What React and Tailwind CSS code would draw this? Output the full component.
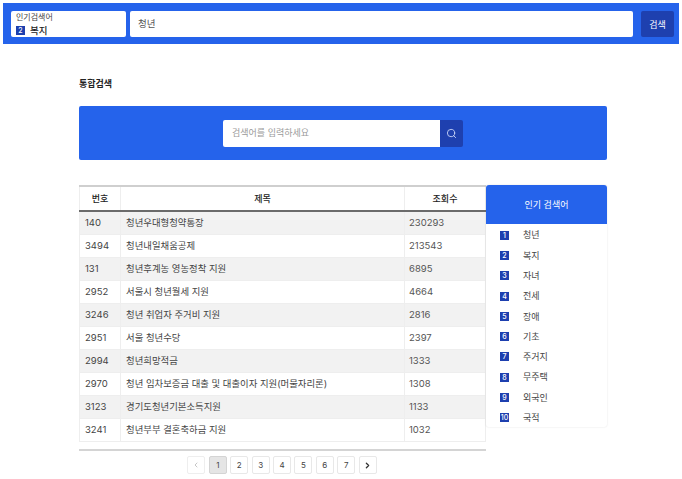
import React from "react";
import { Search, ChevronLeft, ChevronRight } from "lucide-react";

const rows = [
  ["140", "청년우대형청약통장", "230293"],
  ["3494", "청년내일채움공제", "213543"],
  ["131", "청년후계농 영농정착 지원", "6895"],
  ["2952", "서울시 청년월세 지원", "4664"],
  ["3246", "청년 취업자 주거비 지원", "2816"],
  ["2951", "서울 청년수당", "2397"],
  ["2994", "청년희망적금", "1333"],
  ["2970", "청년 임차보증금 대출 및 대출이자 지원(머물자리론)", "1308"],
  ["3123", "경기도청년기본소득지원", "1133"],
  ["3241", "청년부부 결혼축하금 지원", "1032"],
];
const popular = ["청년", "복지", "자녀", "전세", "장애", "기초", "주거지", "무주택", "외국인", "국적"];

function Badge({ n }) {
  return (
    <span className="flex h-[9px] w-[9px] shrink-0 items-center justify-center overflow-hidden bg-[#1e40af] text-[7px] leading-none font-medium text-white">
      {n}
    </span>
  );
}

export default function App() {
  return (
    <div className="h-[479px] w-[682px] overflow-hidden bg-white pt-[3px] font-['Inter','Noto_Sans_CJK_KR',sans-serif] text-[#333]">
      <header className="mx-[3px] flex h-[41px] w-[676px] items-center bg-[#2563eb] pr-[5px] pl-[8px]">
        <div className="flex h-[26px] w-[115px] flex-col justify-end rounded-[2px] bg-white pl-[5px]">
          <span className="mb-[1px] text-[8px] leading-[11px] text-[#444]">인기검색어</span>
          <span className="flex items-center gap-[5px] text-[9.5px] leading-[13px] font-medium text-[#222]">
            <Badge n="2" />
            복지
          </span>
        </div>
        <div className="ml-[4px] flex h-[26px] w-[503px] items-center rounded-[2px] bg-white pt-[2px] pl-[8px] text-[9.5px] text-[#555]">
          청년
        </div>
        <button className="ml-[8px] flex h-[26px] w-[33px] items-center justify-center rounded-[2px] bg-[#1e40af] pt-[2px] text-[9px] text-white">
          검색
        </button>
      </header>

      <main className="mx-[79px] w-[528px]">
        <h1 className="mt-[33px] h-[14px] text-[9px] leading-[14px] font-bold text-[#222]">통합검색</h1>
        <section className="mt-[15px] flex h-[54px] items-center justify-start rounded-[2px] bg-[#2563eb] pl-[144px]">
          <div className="flex h-[27px] w-[217px] items-center rounded-l-[2px] bg-white pl-[9px] text-[9px] text-[#9a9a9a]">
            검색어를 입력하세요
          </div>
          <button className="flex h-[27px] w-[23px] items-center justify-center rounded-r-[2px] bg-[#1e40af] text-[#dbe4ff]">
            <Search size={11} strokeWidth={1.75} />
          </button>
        </section>

        <section className="mt-[25px] flex items-start">
          <div className="w-[407px]">
            <table className="w-[407px] table-fixed border-collapse border-t-2 border-[#cfcfcf] text-[9px]">
              <thead>
                <tr className="h-[25px] border-b-2 border-[#6b6b6b] font-medium text-[#222]">
                  <th className="w-[41px] border-x border-[#eeeeee] font-medium">번호</th>
                  <th className="w-[284px] border-r border-[#eeeeee] font-medium">제목</th>
                  <th className="border-r border-[#eeeeee] font-medium">조회수</th>
                </tr>
              </thead>
              <tbody>
                {rows.map((r, i) => (
                  <tr key={r[0]} className={`h-[23.1px] border-b border-[#eeeeee] ${i % 2 === 0 ? "bg-[#f2f2f2]" : "bg-white"}`}>
                    <td className="border-x border-[#eeeeee] pl-[5px] text-[9.5px] text-[#444]">{r[0]}</td>
                    <td className="truncate border-r border-[#eeeeee] pl-[5px] text-[9.4px] text-[#444]">{r[1]}</td>
                    <td className="border-r border-[#eeeeee] pl-[4px] text-[9.5px] text-[#555]">{r[2]}</td>
                  </tr>
                ))}
              </tbody>
            </table>
            <div className="mt-[7px] h-[2px] bg-[#d4d4d4]" />
            <nav className="mt-[5px] flex justify-center gap-[3.4px] pr-[1px] text-[8px] text-[#444]">
              <button className="flex h-[18px] w-[18px] items-center justify-center rounded-[2px] border border-[#eeeeee] text-[#aaa]">
                <ChevronLeft size={8} />
              </button>
              {[1, 2, 3, 4, 5, 6, 7].map((n) => (
                <button
                  key={n}
                  className={`flex h-[18px] w-[18px] items-center justify-center rounded-[2px] border ${n === 1 ? "border-[#d4d4d4] bg-[#e5e5e5]" : "border-[#e8e8e8] bg-white"}`}
                >
                  {n}
                </button>
              ))}
              <button className="flex h-[18px] w-[18px] items-center justify-center rounded-[2px] border border-[#e8e8e8] text-[#333]">
                <ChevronRight size={9} strokeWidth={3.5} />
              </button>
            </nav>
          </div>

          <aside className="h-[242px] w-[121px] rounded-[3px] bg-white shadow-[0_0_2px_rgba(0,0,0,0.12)]">
            <div className="flex h-[39px] items-center justify-center rounded-t-[3px] bg-[#2563eb] text-[9px] text-white">
              인기 검색어
            </div>
            <ul className="pt-[1px]">
              {popular.map((p, i) => (
                <li key={p} className="flex h-[20.3px] items-center pl-[14px] text-[9px] text-[#444]">
                  <Badge n={i + 1} />
                  <span className="ml-[14px]">{p}</span>
                </li>
              ))}
            </ul>
          </aside>
        </section>
      </main>
    </div>
  );
}
